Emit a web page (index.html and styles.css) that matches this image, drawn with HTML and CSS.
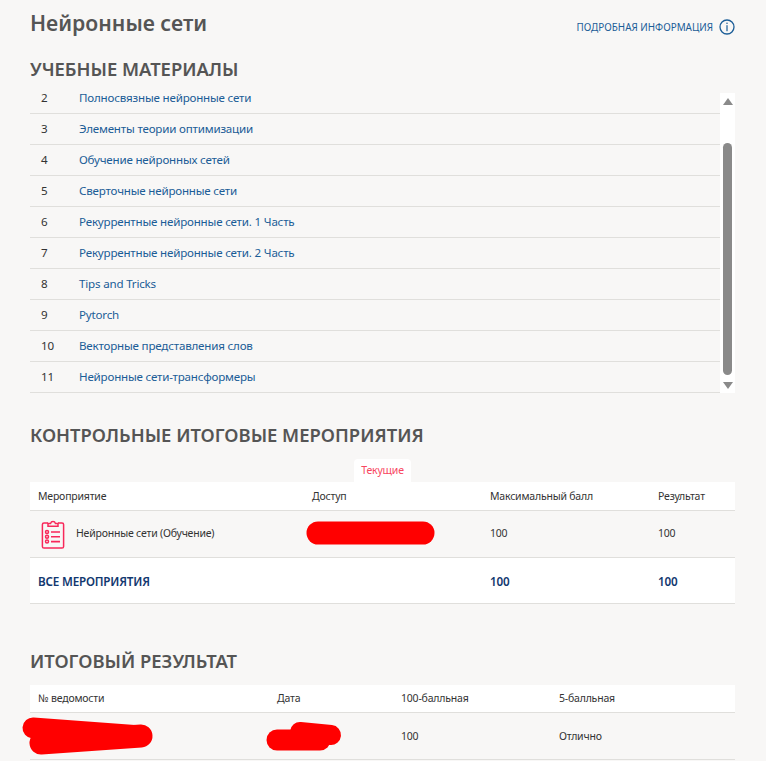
FILE: index.html
```html
<!DOCTYPE html>
<html lang="ru">
<head>
    <meta charset="UTF-8">
    <meta name="viewport" content="width=device-width, initial-scale=1.0">
    <title>Нейронные сети</title>
    <link rel="stylesheet" href="styles.css">
</head>
<body>
    <div class="page">
        <div class="title-row">
            <h1>Нейронные сети</h1>
            <a class="more" href="#">
                Подробная информация
                <svg class="info-icon" viewBox="0 0 16 16" width="16" height="16">
                    <circle cx="8" cy="8" r="7" fill="none" stroke="#1b5d97" stroke-width="1.3"/>
                    <rect x="7.4" y="3.6" width="1.2" height="1.4" fill="#1b5d97"/>
                    <rect x="7.4" y="6.2" width="1.2" height="6" fill="#1b5d97"/>
                </svg>
            </a>
        </div>

        <h2 class="materials-title">Учебные материалы</h2>
        <div class="materials">
            <ul class="lessons">
                <li><span class="num">2</span><a href="#">Полносвязные нейронные сети</a></li>
                <li><span class="num">3</span><a href="#">Элементы теории оптимизации</a></li>
                <li><span class="num">4</span><a href="#">Обучение нейронных сетей</a></li>
                <li><span class="num">5</span><a href="#">Сверточные нейронные сети</a></li>
                <li><span class="num">6</span><a href="#">Рекуррентные нейронные сети. 1 Часть</a></li>
                <li><span class="num">7</span><a href="#">Рекуррентные нейронные сети. 2 Часть</a></li>
                <li><span class="num">8</span><a href="#">Tips and Tricks</a></li>
                <li><span class="num">9</span><a href="#">Pytorch</a></li>
                <li><span class="num">10</span><a href="#">Векторные представления слов</a></li>
                <li><span class="num">11</span><a href="#">Нейронные сети-трансформеры</a></li>
            </ul>
            <div class="scrollbar">
                <span class="arrow arrow-up"></span>
                <span class="thumb"></span>
                <span class="arrow arrow-down"></span>
            </div>
        </div>

        <h2 class="events-title">Контрольные итоговые мероприятия</h2>
        <div class="tabs"><span class="tab">Текущие</span></div>
        <div class="events">
            <div class="row head">
                <div>Мероприятие</div>
                <div>Доступ</div>
                <div>Максимальный балл</div>
                <div>Результат</div>
            </div>
            <div class="row item">
                <div class="event-name">
                    <svg class="clip-icon" viewBox="0 0 24 31" width="24" height="31">
                        <g fill="none" stroke="#f8285a" stroke-width="1.5">
                            <path d="M7 5H3a1.6 1.6 0 0 0-1.6 1.6v21.8A1.6 1.6 0 0 0 3 30h18a1.6 1.6 0 0 0 1.6-1.6V6.600A1.600 1.600 0 0 0 21 5h-4"/>
                            <path d="M7 8.200V5.400h2.600a2.500 2.500 0 0 1 4.800 0H17v2.800z"/>
                            <circle cx="6" cy="14" r="1.500"/>
                            <circle cx="6" cy="18.800" r="1.500"/>
                            <circle cx="6" cy="23.600" r="1.500"/>
                        </g>
                        <path d="M10 14h9M10 18.800h9M10 23.600h9" fill="none" stroke="#f8285a" stroke-width="1.600"/>
                    </svg>
                    Нейронные сети (Обучение)
                </div>
                <div></div>
                <div>100</div>
                <div>100</div>
            </div>
            <div class="row total">
                <div>Все мероприятия</div>
                <div></div>
                <div>100</div>
                <div>100</div>
            </div>
        </div>

        <h2 class="result-title">Итоговый результат</h2>
        <div class="results">
            <div class="row head">
                <div>№ ведомости</div>
                <div>Дата</div>
                <div>100-балльная</div>
                <div>5-балльная</div>
            </div>
            <div class="row item">
                <div></div>
                <div></div>
                <div>100</div>
                <div>Отлично</div>
            </div>
        </div>
    </div>

    <!-- закрашенные данные поверх таблиц -->
    <svg class="marks" viewBox="0 0 766 761" width="766" height="761">
        <g fill="none" stroke="#ff0000" stroke-linecap="round">
            <path d="M318 533H423" stroke-width="23"/>
            <path d="M33 728L141 736" stroke-width="21"/>
            <path d="M41 743L141 736" stroke-width="23"/>
            <path d="M277 740H320" stroke-width="21"/>
            <path d="M300 732L331 735" stroke-width="20"/>
        </g>
    </svg>
</body>
</html>
```

FILE: styles.css
```css
html {
    overflow: hidden;
}

body {
    font-family: "Noto Sans", "Open Sans", Arial, sans-serif;
    background-color: #f8f7f6;
    margin: 0;
    color: #333333;
    font-size: 10.5px;
    letter-spacing: -0.2px;
}

.page {
    width: 705px;
    padding-left: 30px;
}

h1, h2 {
    margin: 0;
    color: #555555;
    font-weight: 600;
    letter-spacing: 0;
}

.title-row {
    display: flex;
    justify-content: space-between;
    align-items: center;
    height: 46px;
}

h1 {
    margin-bottom: 2px;
    font-size: 21.2px;
}

.more {
    display: flex;
    align-items: center;
    gap: 6px;
    margin-top: 8px;
    color: #1b5d97;
    font-size: 9.9px;
    letter-spacing: 0;
    text-transform: uppercase;
    text-decoration: none;
}

h2 {
    font-size: 18.4px;
    line-height: 24px;
    text-transform: uppercase;
}

.materials-title {
    margin-top: 11px;
}

.materials {
    display: flex;
    height: 310px;
    margin-top: 2px;
}

.lessons {
    flex: 1;
    list-style: none;
    margin: 0;
    padding: 0;
    font-size: 11.6px;
}

.lessons li {
    display: flex;
    align-items: center;
    height: 28px;
    padding-bottom: 2px;
    border-bottom: 1px solid #e0dfdc;
}

.lessons .num {
    width: 49px;
    padding-left: 11px;
    box-sizing: border-box;
}

.lessons a {
    color: #1b5d97;
    text-decoration: none;
}

.scrollbar {
    display: flex;
    flex-direction: column;
    align-items: center;
    width: 15px;
    height: 300px;
    margin-top: 10px;
    background-color: #ffffff;
}

.arrow {
    width: 0;
    height: 0;
    border-left: 5px solid transparent;
    border-right: 5px solid transparent;
}

.arrow-up {
    margin-top: 5px;
    border-bottom: 7px solid #8a8a8a;
}

.arrow-down {
    margin-top: 7px;
    border-top: 7px solid #8a8a8a;
}

.thumb {
    width: 9px;
    height: 232px;
    margin-top: 38px;
    border-radius: 5px;
    background-color: #8a8a8a;
}

.events-title {
    margin-top: 30px;
}

.tabs {
    display: flex;
    margin-top: 12px;
    padding-left: 324px;
}

.tab {
    width: 57px;
    height: 23px;
    line-height: 23px;
    text-align: center;
    color: #f8475f;
    background-color: #ffffff;
    border-radius: 4px 4px 0 0;
}

.row {
    display: grid;
    align-items: center;
    border-bottom: 1px solid #e0dfdc;
}

.row > div {
    padding-left: 8px;
}

.events .row {
    grid-template-columns: 274px 178px 168px 85px;
}

.results .row {
    grid-template-columns: 239px 124px 158px 184px;
}

.head {
    height: 28px;
    background-color: #ffffff;
}

.results .head {
    height: 25px;
    padding-bottom: 2px;
}

.item {
    height: 44px;
    padding-bottom: 2px;
}

.results .item {
    height: 46px;
    padding-bottom: 0;
}

.total {
    height: 45px;
    background-color: #ffffff;
    color: #12386f;
    font-size: 11.7px;
    font-weight: 600;
}

.total > div:first-child {
    text-transform: uppercase;
}

.event-name {
    display: flex;
    align-items: center;
    gap: 11px;
}

.clip-icon {
    margin-left: 3px;
}

.result-title {
    margin-top: 45px;
}

.results {
    margin-top: 12px;
}

.marks {
    position: absolute;
    top: 0;
    left: 0;
}
```
